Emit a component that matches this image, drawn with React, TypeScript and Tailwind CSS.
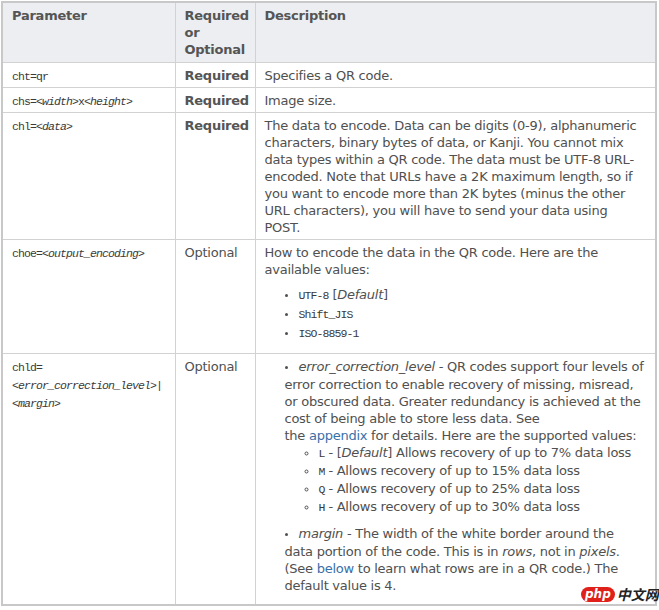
const sans = "font-['DejaVu_Sans',Verdana,sans-serif]";
const code = "font-['Liberation_Mono','DejaVu_Sans_Mono',monospace] text-[11.5px] leading-none tracking-[-0.9px] text-[#3a3a3a]";

function Code({ children }: { children: React.ReactNode }) {
  return <code className={code}>{children}</code>;
}

function V({ children }: { children: React.ReactNode }) {
  return <var className="italic">{children}</var>;
}

const th = "border border-[#d2d2d2] px-[9px] py-1 text-left align-top font-bold text-[#555]";
const td = "border border-[#d2d2d2] px-[9px] pt-1 pb-[3px] align-top";

export default function App() {
  return (
    <div className={`${sans} relative text-[13px] leading-[17px] tracking-[-0.25px] text-[#505050] bg-white w-[659px] h-[610px] pt-px pl-px`}>
      <table className="border-collapse border-2 border-[#c8c8c8] w-[656px] table-fixed">
        <colgroup>
          <col className="w-[173px]" />
          <col className="w-[80px]" />
          <col />
        </colgroup>
        <thead>
          <tr className="bg-[#eceef1]">
            <th className={th}>Parameter</th>
            <th className={th}>Required or Optional</th>
            <th className={th}>Description</th>
          </tr>
        </thead>
        <tbody>
          <tr>
            <td className={td}><Code>cht=qr</Code></td>
            <td className={`${td} font-bold text-[#555]`}>Required</td>
            <td className={td}>Specifies a QR code.</td>
          </tr>
          <tr>
            <td className={td}><Code>chs=&lt;<V>width</V>&gt;x&lt;<V>height</V>&gt;</Code></td>
            <td className={`${td} font-bold text-[#555]`}>Required</td>
            <td className={td}>Image size.</td>
          </tr>
          <tr>
            <td className={td}><Code>chl=&lt;<V>data</V>&gt;</Code></td>
            <td className={`${td} font-bold text-[#555]`}>Required</td>
            <td className={td}>
              The data to encode. Data can be digits (0-9), alphanumeric characters, binary bytes of data, or Kanji.
              You cannot mix data types within a QR code. The data must be UTF-8 URL-encoded. Note that URLs have a 2K
              maximum length, so if you want to encode more than 2K bytes (minus the other URL characters), you will
              have to send your data using POST.
            </td>
          </tr>
          <tr>
            <td className={td}><Code>choe=&lt;<V>output_encoding</V>&gt;</Code></td>
            <td className={td}>Optional</td>
            <td className={td}>
              How to encode the data in the QR code. Here are the available values:
              <ul className="list-disc list-inside pl-5 mt-[8px] mb-[7px] leading-[18px] marker:text-[10px]">
                <li><Code>UTF-8</Code> [<i>Default</i>]</li>
                <li><Code>Shift_JIS</Code></li>
                <li><Code>ISO-8859-1</Code></li>
              </ul>
            </td>
          </tr>
          <tr>
            <td className={`${td} leading-[18px]`}>
              <Code>chld=<br />&lt;<V>error_correction_level</V>&gt;|<br />&lt;<V>margin</V>&gt;</Code>
            </td>
            <td className={td}>Optional</td>
            <td className={`${td} pr-[11px] pb-[10px]`}>
              <ul className="list-disc list-inside pl-5 marker:text-[10px]">
                <li className="mb-[9px]">
                  <i>error_correction_level</i> - QR codes support four levels of error correction to enable recovery of
                  missing, misread, or obscured data. Greater redundancy is achieved at the cost of being able to store
                  less data. See
                  <br />
                  the <a className="text-[#3a6fa8]">appendix</a> for details. Here are the supported values:
                  <ul className="list-[circle] list-inside pl-5 leading-[17px] marker:text-[10px]">
                    <li><Code>L</Code> - [<i>Default</i>] Allows recovery of up to 7% data loss</li>
                    <li><Code>M</Code> - Allows recovery of up to 15% data loss</li>
                    <li><Code>Q</Code> - Allows recovery of up to 25% data loss</li>
                    <li><Code>H</Code> - Allows recovery of up to 30% data loss</li>
                  </ul>
                </li>
                <li>
                  <i>margin</i> - The width of the white border around the data portion of the code. This is in{" "}
                  <i>rows</i>, not in <i>pixels</i>. (See <a className="text-[#3a6fa8]">below</a> to learn what rows
                  are in a QR code.) The default value is 4.
                </li>
              </ul>
            </td>
          </tr>
        </tbody>
      </table>
      {/* watermark */}
      <div className="absolute left-[581px] top-[587px] flex items-center gap-[2px] whitespace-nowrap tracking-normal">
        <span className="rounded-full bg-[#e0201a] px-[4px] text-[12px] leading-[15px] italic font-bold text-white">php</span>
        <span className="font-['Noto_Sans_CJK_SC',sans-serif] text-[14px] leading-[15px] font-bold italic text-[#222]">中文网</span>
      </div>
    </div>
  );
}
